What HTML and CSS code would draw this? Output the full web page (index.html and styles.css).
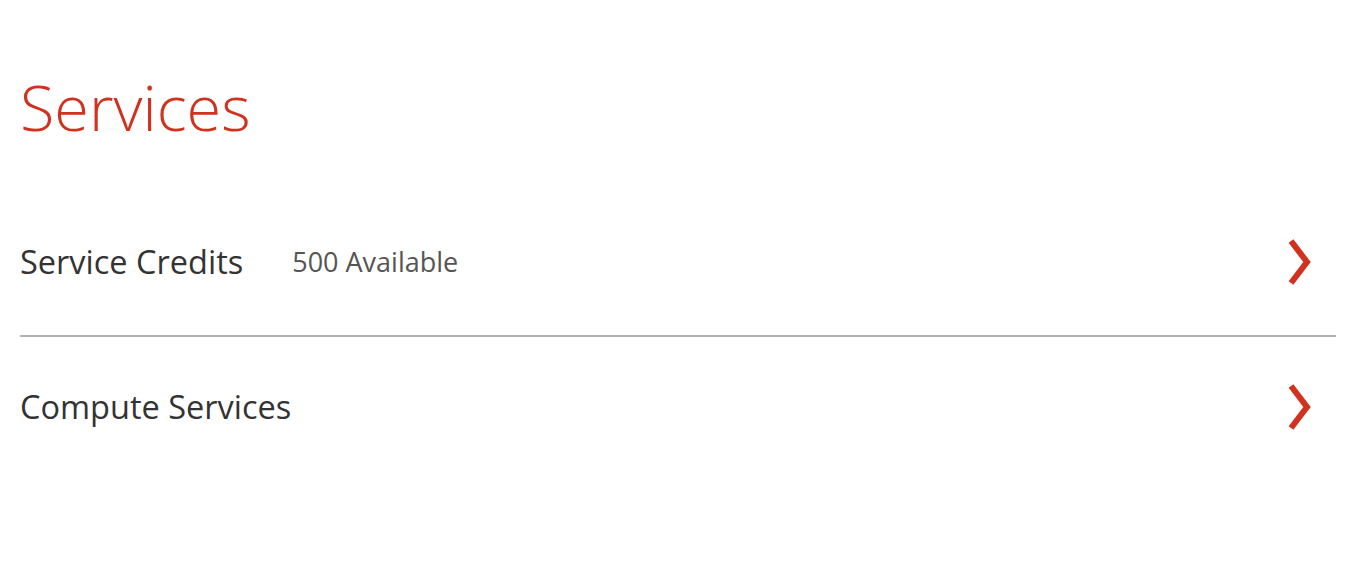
FILE: index.html
```html
<!DOCTYPE html>
<html lang="en">
<head>
    <meta charset="UTF-8">
    <meta name="viewport" content="width=device-width, initial-scale=1.0">
    <title>Services</title>
    <link rel="stylesheet" href="styles.css">
</head>
<body>
    <div class="container">
        <h1 class="page-title">Services</h1>
        <ul class="service-list">
            <li class="service-row">
                <span class="service-name">Service Credits</span>
                <span class="service-meta">500 Available</span>
                <svg class="chevron" width="24" height="46" viewBox="0 0 24 46" aria-hidden="true">
                    <polyline points="3,2 19,23 3,44" fill="none" stroke="#d0321f" stroke-width="6"/>
                </svg>
            </li>
            <li class="service-row">
                <span class="service-name">Compute Services</span>
                <svg class="chevron" width="24" height="46" viewBox="0 0 24 46" aria-hidden="true">
                    <polyline points="3,2 19,23 3,44" fill="none" stroke="#d0321f" stroke-width="6"/>
                </svg>
            </li>
        </ul>
    </div>
</body>
</html>
```

FILE: styles.css
```css
body {
    font-family: "Open Sans", "Noto Sans", Arial, sans-serif;
    background-color: #fff;
    margin: 0;
    padding: 0;
}

.container {
    padding: 62px 16px 0 20px;
}

.page-title {
    margin: 0;
    font-size: 63px;
    font-weight: 300;
    line-height: 90px;
    color: #d0321f;
}

.service-list {
    list-style: none;
    margin: 38px 0 0;
    padding: 0;
}

.service-row {
    display: flex;
    align-items: center;
    box-sizing: border-box;
    height: 145px;
    padding: 0 24px 2px 0;
}

.service-row + .service-row {
    border-top: 2px solid #b3b3b3;
    padding-bottom: 4px;
}

.service-name {
    font-size: 32.5px;
    color: #333;
}

.service-meta {
    margin-left: 49px;
    font-size: 27px;
    color: #555;
}

.chevron {
    margin-left: auto;
}
```
